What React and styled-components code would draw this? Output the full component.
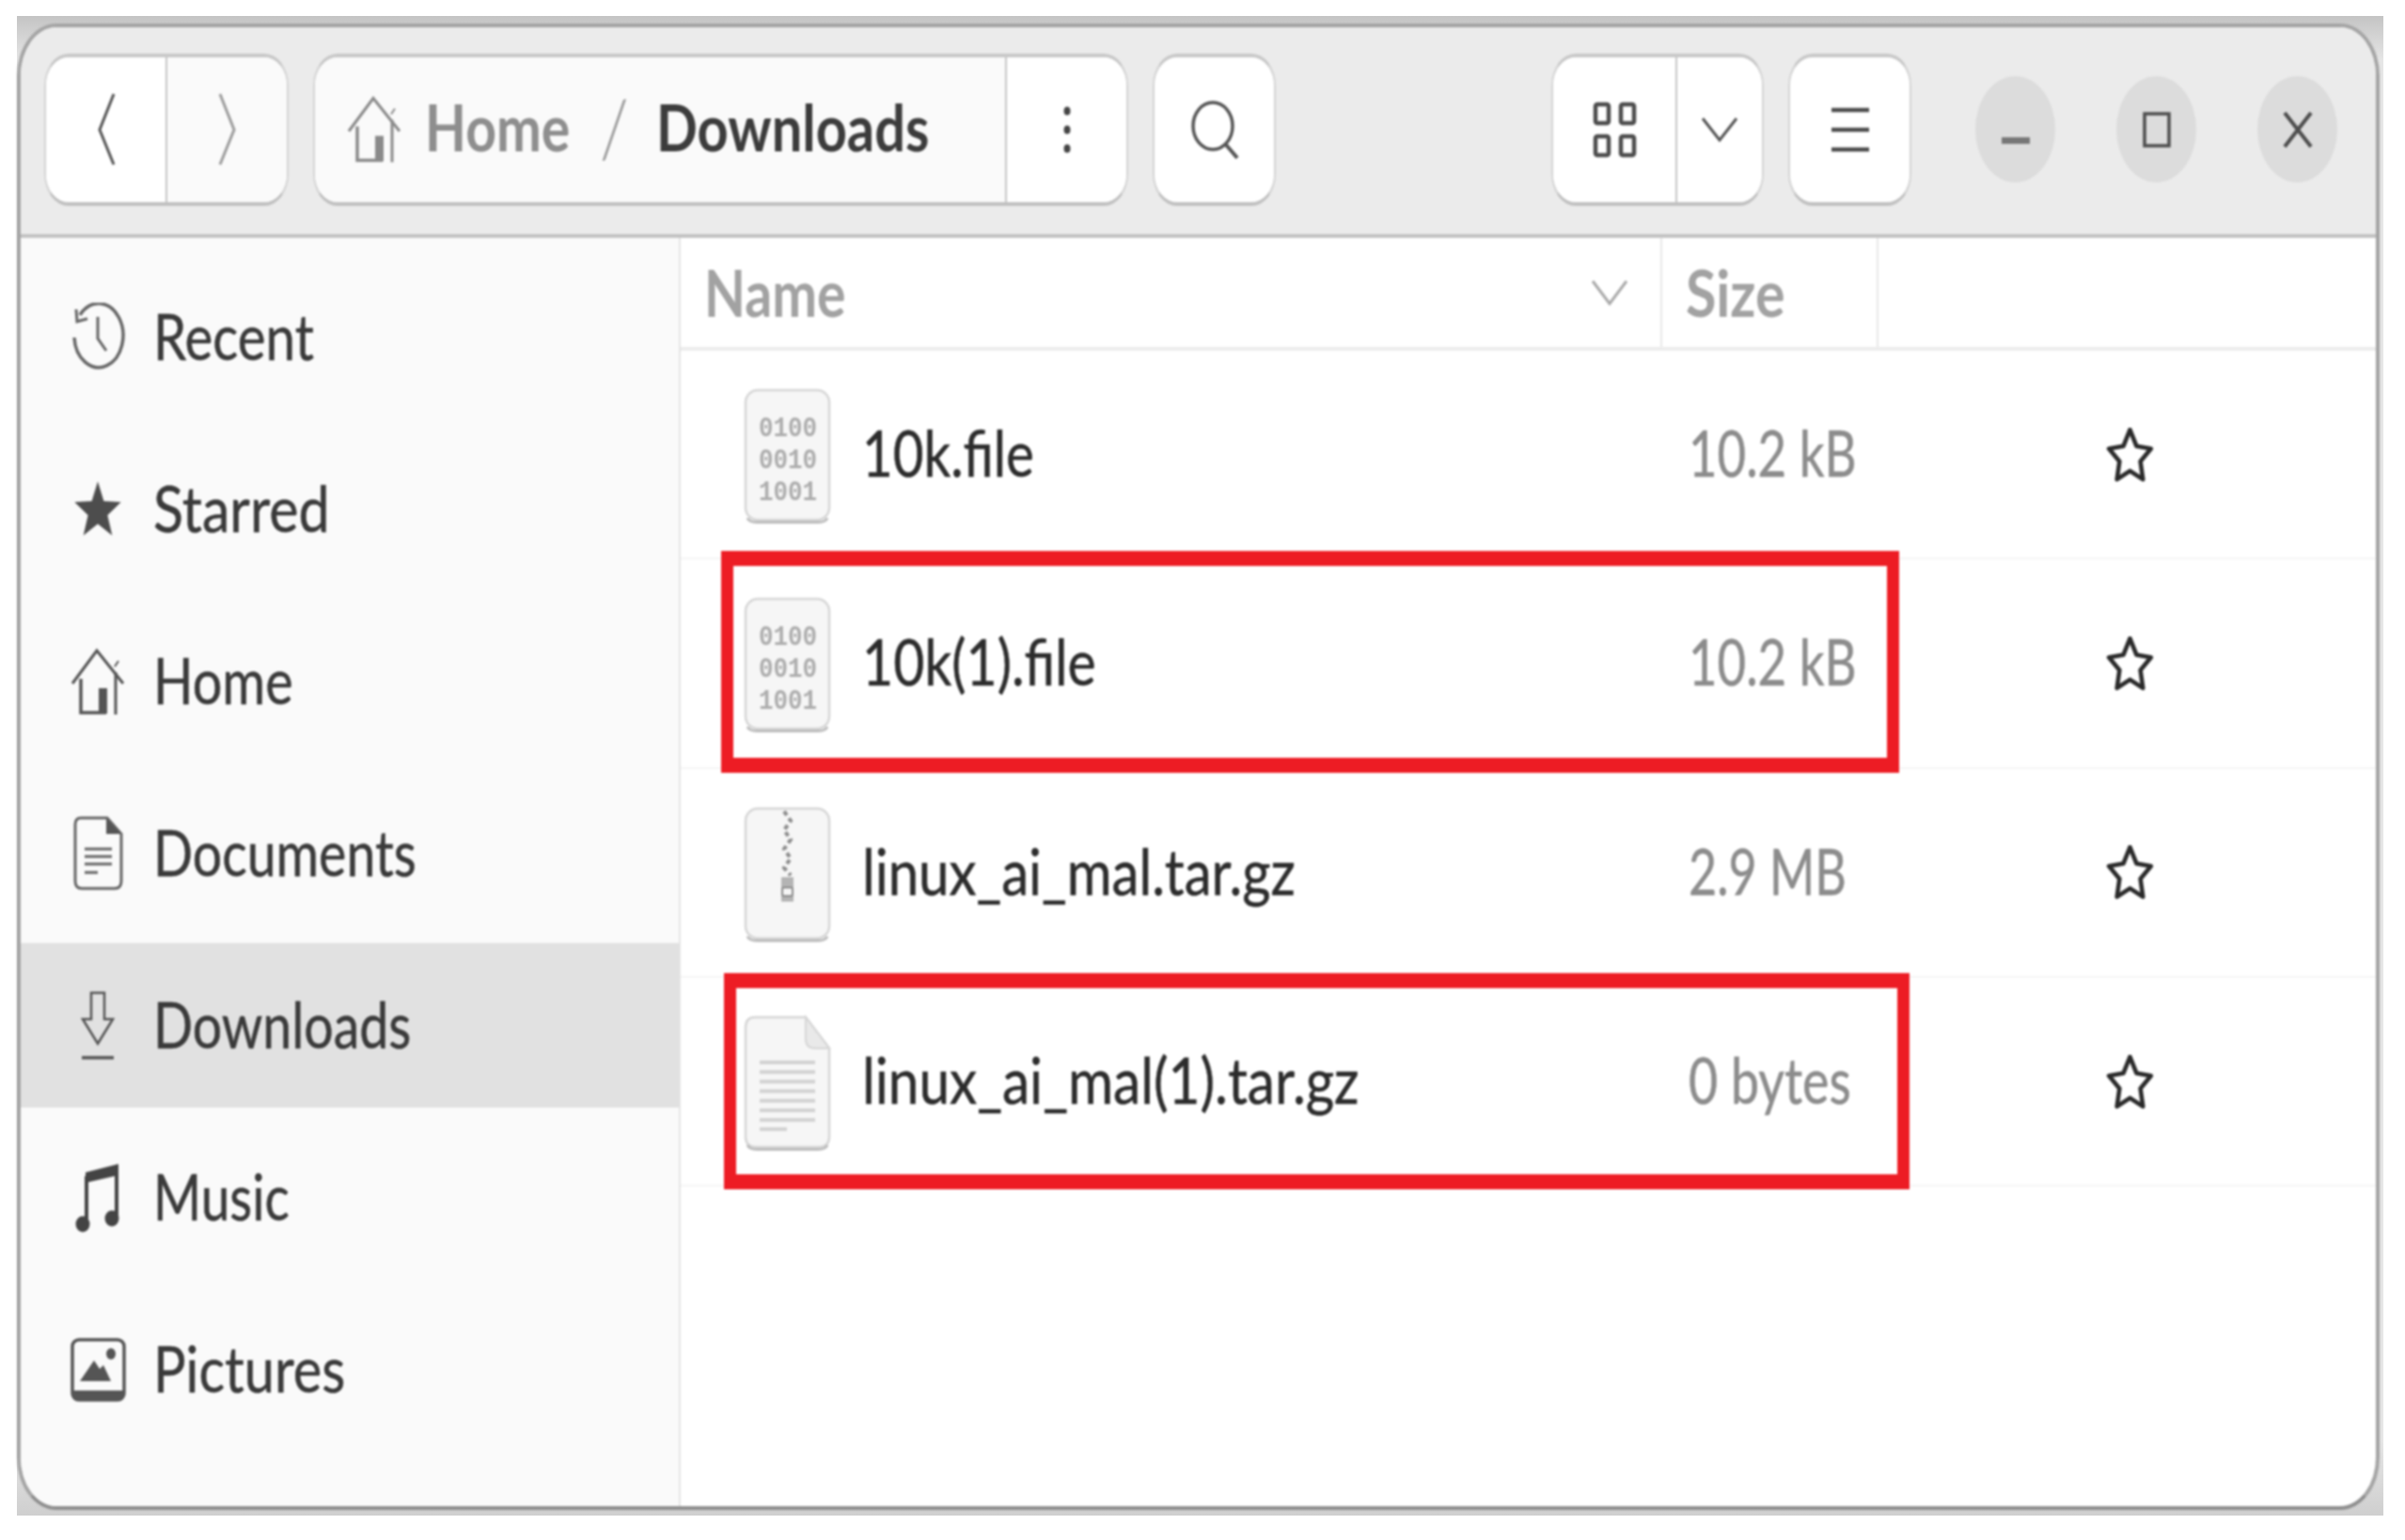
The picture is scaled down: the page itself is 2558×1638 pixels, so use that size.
import React from 'react';
import styled, { createGlobalStyle } from 'styled-components';

const GlobalStyle = createGlobalStyle`
  html, body {
    margin: 0;
    background: #ffffff;
  }
  #root {
    width: 2558px;
    height: 1638px;
    overflow: hidden;
  }
`;

const Backdrop = styled.div`
  box-sizing: border-box;
  width: 2517px;
  height: 1595px;
  margin: 17px 0 0 18px;
  padding: 8px 4px 6px 0;
  background: linear-gradient(#c4c4c4, #e6e6e6 3%, #e6e6e6 95%, #cfcfcf);
`;

const Window = styled.div`
  box-sizing: border-box;
  height: 100%;
  display: flex;
  flex-direction: column;
  overflow: hidden;
  background: #ffffff;
  border: 4px solid #a4a4a4;
  border-bottom-color: #8e8e8e;
  border-radius: 42px / 56px;
  filter: blur(0.9px);
`;

const Header = styled.header`
  box-sizing: border-box;
  flex: none;
  height: 224px;
  padding: 0 41px 3px 25px;
  display: flex;
  align-items: center;
  gap: 26px;
  background: #ebebeb;
  border-bottom: 4px solid #c2c2c2;
`;

const ButtonGroup = styled.div`
  box-sizing: border-box;
  height: 162px;
  display: flex;
  overflow: hidden;
  background: #ffffff;
  border: 2px solid #d4d4d4;
  border-top: 4px solid #c8c8c8;
  border-bottom: 4px solid #c0c0c0;
  border-radius: 26px / 34px;
`;

const Segment = styled.div`
  box-sizing: border-box;
  width: ${p => p.$w}px;
  display: flex;
  align-items: center;
  justify-content: center;
  background: ${p => p.$bg || '#ffffff'};
  border-left: ${p => (p.$divider ? '2px solid #c6c6c6' : 'none')};
`;

const PathSegment = styled(Segment)`
  justify-content: flex-start;
  padding-left: 34px;
`;

const Spacer = styled.div`
  flex: 1;
`;

const WindowControls = styled.div`
  display: flex;
  gap: 65px;
  margin-left: 42px;
`;

const WindowControl = styled.div`
  width: 85px;
  height: 113px;
  border-radius: 50%;
  background: #dcdcdc;
  display: flex;
  align-items: center;
  justify-content: center;
`;

const Label = styled.span`
  display: inline-block;
  flex: none;
  width: ${p => (p.$w ? `${p.$w}px` : 'auto')};
  margin-left: ${p => p.$ml || 0}px;
  margin-bottom: ${p => p.$mb || 0}px;
  font-family: Lato, "Open Sans", sans-serif;
  font-size: 68px;
  line-height: 1;
  font-weight: ${p => (p.$bold ? 700 : 400)};
  color: ${p => p.$color || '#333333'};
  -webkit-text-stroke: ${p => (p.$bold ? '0' : '0.5px')};
  white-space: nowrap;
  transform: scaleX(${p => p.$sx || 0.84});
  transform-origin: left center;
`;

const Slash = styled(Label)`
  font-size: 84px;
  font-weight: 300;
  -webkit-text-stroke: 0;
`;

const Body = styled.div`
  flex: 1;
  min-height: 0;
  display: flex;
`;

const Sidebar = styled.nav`
  box-sizing: border-box;
  flex: none;
  width: 702px;
  padding-top: 18px;
  display: flex;
  flex-direction: column;
  gap: 8px;
  background: #fafafa;
  border-right: 2px solid #e4e4e4;
`;

const SideRow = styled.div`
  flex: none;
  height: 175px;
  padding-left: 52px;
  display: flex;
  align-items: center;
  gap: 29px;
  background: ${p => (p.$active ? '#e1e1e1' : 'transparent')};
`;

const SideIcon = styled.div`
  width: 60px;
  display: flex;
  justify-content: center;
`;

const Main = styled.main`
  flex: 1;
  min-width: 0;
`;

const ListHead = styled.div`
  box-sizing: border-box;
  height: 120px;
  display: flex;
  border-bottom: 4px solid #ececec;
`;

const HeadCell = styled.div`
  box-sizing: border-box;
  width: ${p => p.$w}px;
  padding: 0 34px 0 25px;
  display: flex;
  align-items: center;
  justify-content: space-between;
  border-right: 2px solid #e8e8e8;
`;

const FileRow = styled.div`
  box-sizing: border-box;
  position: relative;
  height: 222.3px;
  padding: 3px 0 0 67px;
  display: flex;
  align-items: center;
  border-bottom: 2px solid #f5f5f5;
`;

const FileIconBox = styled.div`
  flex: none;
  width: 93px;
  height: 145px;
  margin-right: 33px;
`;

const NameCell = styled.div`
  flex: none;
  width: 879px;
  padding-bottom: 7px;
`;

const SizeCell = styled.div`
  flex: none;
  width: 444px;
  padding-bottom: 7px;
`;

const Marker = styled.div`
  position: absolute;
  left: ${p => p.$left}px;
  top: ${p => p.$top}px;
  width: ${p => p.$w}px;
  height: ${p => p.$h}px;
  box-sizing: border-box;
  border: solid #ed1c24;
  border-width: 16px 13px;
  pointer-events: none;
`;

const Svg = ({ w, h, children }) => (
  <svg width={w} height={h} viewBox={`0 0 ${w} ${h}`} fill="none" style={{ display: 'block' }}>
    {children}
  </svg>
);

const starPoints = (w, h, inner = 0.42) => {
  const pts = [];
  for (let i = 0; i < 10; i++) {
    const r = i % 2 === 0 ? 1 : inner;
    const a = -Math.PI / 2 + (i * Math.PI) / 5;
    pts.push(`${(w / 2 + (w / 2) * r * Math.cos(a)).toFixed(1)},${(h * 0.53 + h * 0.53 * r * Math.sin(a)).toFixed(1)}`);
  }
  return pts.join(' ');
};

const Chevron = ({ dir, color }) => (
  <Svg w={20} h={79}>
    <path
      d={dir === 'left' ? 'M18 2 L3 40 L18 77' : 'M2 2 L17 40 L2 77'}
      stroke={color}
      strokeWidth="3"
    />
  </Svg>
);

const HomeIcon = ({ color = '#555', w = 58, h = 72 }) => (
  <svg width={w} height={h} viewBox="0 0 58 72" fill="none" style={{ display: 'block' }}>
    <path d="M2 38 L28 3 L56 38" stroke={color} strokeWidth="3" />
    <path d="M11 33 V69 H38" stroke={color} strokeWidth="3.5" />
    <rect x="30" y="43" width="9" height="27" fill={color} />
    <path d="M48 26 V71" stroke={color} strokeWidth="3" />
    <path d="M47 20 L51 14" stroke={color} strokeWidth="2" />
  </svg>
);

const RecentIcon = () => (
  <Svg w={57} h={73}>
    <path d="M9 13 A26 34 0 1 1 3 37" stroke="#666" strokeWidth="3.5" />
    <path d="M5 7 L6 20 L17 17" stroke="#666" strokeWidth="3" />
    <path d="M28 15 V38 L37 51" stroke="#666" strokeWidth="3" />
  </Svg>
);

const StarFilledIcon = () => (
  <Svg w={52} h={60}>
    <polygon points={starPoints(52, 60)} fill="#4d4d4d" />
  </Svg>
);

const DocumentIcon = () => (
  <Svg w={53} h={79}>
    <path d="M8 2 H36 L51 19 V69 Q51 77 44 77 H9 Q2 77 2 69 V9 Q2 2 8 2 Z" stroke="#666" strokeWidth="3" />
    <path d="M35 2 L51 19 H35 Z" fill="#555" />
    <path d="M12 35 H41 M12 43 H41 M12 51 H41" stroke="#666" strokeWidth="3" />
    <path d="M12 60 H26" stroke="#666" strokeWidth="3" />
  </Svg>
);

const DownloadIcon = () => (
  <Svg w={36} h={73}>
    <path d="M11 2 H25 V30 H34 L18 56 L2 30 H11 Z" stroke="#555" strokeWidth="2.5" />
    <path d="M1 71 H35" stroke="#555" strokeWidth="3.5" />
  </Svg>
);

const MusicIcon = () => (
  <Svg w={48} h={74}>
    <path d="M11 10 L46 1 V13 L11 21 Z" fill="#444" />
    <path d="M12 14 V64 M44 6 V58" stroke="#444" strokeWidth="4" />
    <ellipse cx="8" cy="65" rx="7.5" ry="8.5" fill="#444" />
    <ellipse cx="39" cy="59" rx="7.5" ry="8.5" fill="#444" />
  </Svg>
);

const PicturesIcon = () => (
  <Svg w={59} h={68}>
    <rect x="2" y="2" width="55" height="64" rx="7" stroke="#555" strokeWidth="3.5" />
    <path d="M2 56 H57 V60 Q57 67 50 67 H9 Q2 67 2 60 Z" fill="#555" />
    <path d="M10 46 L25 24 L31 33 L35 29 L43 46 Z" fill="#555" />
    <ellipse cx="43" cy="17" rx="5" ry="6" fill="#555" />
  </Svg>
);

const DotsIcon = () => (
  <Svg w={8} h={50}>
    <ellipse cx="4" cy="5" rx="3.5" ry="4.5" fill="#444" />
    <ellipse cx="4" cy="25" rx="3.5" ry="4.5" fill="#444" />
    <ellipse cx="4" cy="45" rx="3.5" ry="4.5" fill="#444" />
  </Svg>
);

const SearchIcon = () => (
  <Svg w={52} h={62}>
    <ellipse cx="24" cy="27" rx="21" ry="25" stroke="#555" strokeWidth="3.5" />
    <path d="M38 47 L50 61" stroke="#555" strokeWidth="4" />
  </Svg>
);

const GridIcon = () => (
  <Svg w={47} h={60}>
    {[[3, 3], [30, 3], [3, 37], [30, 37]].map(([x, y]) => (
      <rect key={`${x}-${y}`} x={x} y={y} width="14" height="20" rx="2" stroke="#4d4d4d" strokeWidth="4.5" />
    ))}
  </Svg>
);

const DownChevron = ({ w, h, color, sw = 3 }) => (
  <Svg w={w} h={h}>
    <path d={`M2 2 L${w / 2} ${h - 2} L${w - 2} 2`} stroke={color} strokeWidth={sw} />
  </Svg>
);

const MenuIcon = () => (
  <Svg w={40} h={48}>
    <path d="M0 3 H40 M0 24 H40 M0 45 H40" stroke="#4d4d4d" strokeWidth="4.5" />
  </Svg>
);

const MinimizeIcon = () => (
  <Svg w={30} h={50}>
    <rect width="30" height="7" y="33" fill="#777777" />
  </Svg>
);

const MaximizeIcon = () => (
  <Svg w={30} h={40}>
    <rect x="2" y="3" width="26" height="34" stroke="#4d4d4d" strokeWidth="3.5" />
  </Svg>
);

const CloseIcon = () => (
  <Svg w={32} h={40}>
    <path d="M2 2 L30 38 M30 2 L2 38" stroke="#4d4d4d" strokeWidth="4" />
  </Svg>
);

const OutlineStar = () => (
  <Svg w={51} h={60}>
    <g transform="translate(2 2) scale(0.92 0.92)">
      <polygon points={starPoints(51, 60, 0.5)} stroke="#2a2a2a" strokeWidth="5" strokeLinejoin="round" />
    </g>
  </Svg>
);

const FileShape = ({ children, folded }) => (
  <svg width="93" height="145" viewBox="0 0 93 145" fill="none" style={{ display: 'block' }}>
    {folded ? (
      <>
        <path d="M12 3 H66 L91 36 V130 Q91 141 80 141 H13 Q2 141 2 130 V14 Q2 3 12 3 Z" fill="#f6f6f6" stroke="#d6d6d6" strokeWidth="2.5" />
        <path d="M66 3 V26 Q66 36 76 36 H91 Z" fill="#e9e9e9" stroke="#d6d6d6" strokeWidth="2" />
      </>
    ) : (
      <rect x="2" y="3" width="89" height="138" rx="13" fill="#f6f6f6" stroke="#d6d6d6" strokeWidth="2.5" />
    )}
    <path d="M4 139 Q6 143.5 14 143.5 H79 Q87 143.5 89 139" stroke="#bdbdbd" strokeWidth="3" />
    {children}
  </svg>
);

const BinaryIcon = () => (
  <FileShape>
    {['0100', '0010', '1001'].map((bits, i) => (
      <text
        key={bits}
        x="16"
        y={52 + i * 34}
        textLength="62"
        lengthAdjust="spacingAndGlyphs"
        fontFamily="'Liberation Mono', monospace"
        fontSize="29"
        fontWeight="700"
        fill="#adadad"
      >
        {bits}
      </text>
    ))}
  </FileShape>
);

const ZipIcon = () => (
  <FileShape>
    <path d="M43 6 L50 16 L43 26 L50 36 L43 46 L50 56 L43 66 L50 74" stroke="#8c8c8c" strokeWidth="4" strokeDasharray="5 4" />
    <rect x="40" y="76" width="13" height="26" fill="#b4b4b4" />
    <rect x="41" y="87" width="11" height="9" rx="2" fill="#f6f6f6" stroke="#8c8c8c" strokeWidth="2" />
  </FileShape>
);

const TextFileIcon = () => (
  <FileShape folded>
    {[0, 1, 2, 3, 4, 5, 6].map(i => (
      <rect key={i} x="17" y={49 + i * 10.2} width="59" height="4" fill="#d2d2d2" />
    ))}
    <rect x="17" y="120" width="29" height="4" fill="#d2d2d2" />
  </FileShape>
);

const places = [
  { name: 'Recent', icon: <RecentIcon />, sx: 0.83 },
  { name: 'Starred', icon: <StarFilledIcon />, sx: 0.87 },
  { name: 'Home', icon: <HomeIcon />, sx: 0.82 },
  { name: 'Documents', icon: <DocumentIcon />, sx: 0.815 },
  { name: 'Downloads', icon: <DownloadIcon />, sx: 0.815, active: true },
  { name: 'Music', icon: <MusicIcon />, sx: 0.81 },
  { name: 'Pictures', icon: <PicturesIcon />, sx: 0.85 },
];

const files = [
  { name: '10k.file', nameSx: 0.83, size: '10.2 kB', sizeSx: 0.775, icon: <BinaryIcon /> },
  { name: '10k(1).file', nameSx: 0.84, size: '10.2 kB', sizeSx: 0.775, icon: <BinaryIcon />, marker: { left: 43, top: -9, w: 1253, h: 236 } },
  { name: 'linux_ai_mal.tar.gz', nameSx: 0.855, size: '2.9 MB', sizeSx: 0.765, icon: <ZipIcon /> },
  { name: 'linux_ai_mal(1).tar.gz', nameSx: 0.86, size: '0 bytes', sizeSx: 0.79, icon: <TextFileIcon />, marker: { left: 46, top: -5, w: 1261, h: 230 } },
];

export default function App() {
  return (
    <>
      <GlobalStyle />
      <Backdrop>
        <Window>
          <Header>
            <ButtonGroup>
              <Segment $w={127}>
                <Chevron dir="left" color="#555" />
              </Segment>
              <Segment $w={129} $divider $bg="#fafafa">
                <Chevron dir="right" color="#9c9c9c" />
              </Segment>
            </ButtonGroup>
            <ButtonGroup>
              <PathSegment $w={734} $bg="#fafafa">
                <HomeIcon color="#8a8a8a" w={58} h={73} />
                <Label $w={186} $ml={25} $mb={5} $bold $color="#8e8e8e">Home</Label>
                <Slash $w={60} $mb={5} $color="#9a9a9a">/</Slash>
                <Label $sx={0.85} $mb={5} $bold $color="#3c3c3c">Downloads</Label>
              </PathSegment>
              <Segment $w={129} $divider>
                <DotsIcon />
              </Segment>
            </ButtonGroup>
            <ButtonGroup>
              <Segment $w={127}>
                <SearchIcon />
              </Segment>
            </ButtonGroup>
            <Spacer />
            <ButtonGroup>
              <Segment $w={130}>
                <GridIcon />
              </Segment>
              <Segment $w={92} $divider>
                <DownChevron w={40} h={27} color="#555" />
              </Segment>
            </ButtonGroup>
            <ButtonGroup>
              <Segment $w={127}>
                <MenuIcon />
              </Segment>
            </ButtonGroup>
            <WindowControls>
              <WindowControl><MinimizeIcon /></WindowControl>
              <WindowControl><MaximizeIcon /></WindowControl>
              <WindowControl><CloseIcon /></WindowControl>
            </WindowControls>
          </Header>
          <Body>
            <Sidebar>
              {places.map(place => (
                <SideRow key={place.name} $active={place.active}>
                  <SideIcon>{place.icon}</SideIcon>
                  <Label $sx={place.sx} $mb={4} $color="#3a3a3a">{place.name}</Label>
                </SideRow>
              ))}
            </Sidebar>
            <Main>
              <ListHead>
                <HeadCell $w={1044}>
                  <Label $bold $color="#a2a2a2">Name</Label>
                  <DownChevron w={40} h={28} color="#aaaaaa" />
                </HeadCell>
                <HeadCell $w={230}>
                  <Label $sx={0.87} $bold $color="#a2a2a2">Size</Label>
                </HeadCell>
              </ListHead>
              {files.map(file => (
                <FileRow key={file.name}>
                  <FileIconBox>{file.icon}</FileIconBox>
                  <NameCell>
                    <Label $sx={file.nameSx} $color="#2c2c2c">{file.name}</Label>
                  </NameCell>
                  <SizeCell>
                    <Label $sx={file.sizeSx} $color="#8c8c8c">{file.size}</Label>
                  </SizeCell>
                  <OutlineStar />
                  {file.marker && (
                    <Marker
                      $left={file.marker.left}
                      $top={file.marker.top}
                      $w={file.marker.w}
                      $h={file.marker.h}
                    />
                  )}
                </FileRow>
              ))}
            </Main>
          </Body>
        </Window>
      </Backdrop>
    </>
  );
}
